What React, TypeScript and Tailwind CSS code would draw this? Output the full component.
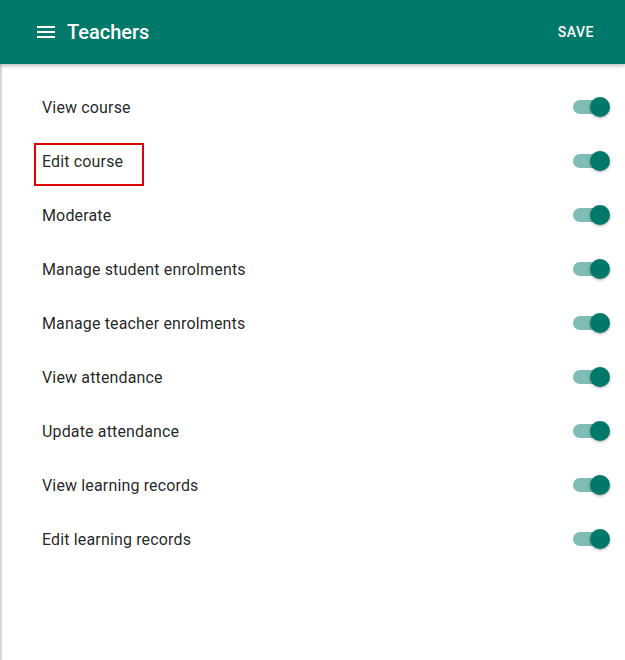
import { useState } from 'react';

const permissions = [
  'View course',
  'Edit course',
  'Moderate',
  'Manage student enrolments',
  'Manage teacher enrolments',
  'View attendance',
  'Update attendance',
  'View learning records',
  'Edit learning records',
];

function Toggle({ on, onClick }: { on: boolean; onClick: () => void }) {
  return (
    <button onClick={onClick} className="relative w-[40px] h-[20px] flex items-center">
      <span className={`block ml-[3px] w-[34px] h-[14px] rounded-full ${on ? 'bg-[#7fbcb5]' : 'bg-[#b0b0b0]'}`} />
      <span
        className={`absolute top-0 w-[20px] h-[20px] rounded-full shadow-[0_1px_3px_rgba(0,0,0,0.35)] ${
          on ? 'left-[20px] bg-[#00796b]' : 'left-0 bg-[#fafafa]'
        }`}
      />
    </button>
  );
}

export default function App() {
  const [enabled, setEnabled] = useState<boolean[]>(permissions.map(() => true));

  return (
    <div className="w-[625px] h-[660px] bg-white flex flex-col font-['Roboto',sans-serif]">
      {/* App bar */}
      <div className="h-[64px] shrink-0 bg-[#00796b] flex items-center pl-[34px] pr-[31px] shadow-[0_2px_4px_rgba(0,0,0,0.25)] z-10">
        <svg width="24" height="24" viewBox="0 0 24 24" fill="white">
          <path d="M3 18h18v-2H3v2zm0-5h18v-2H3v2zm0-7v2h18V6H3z" />
        </svg>
        <h1 className="ml-[9px] text-white text-[20px] font-medium">Teachers</h1>
        <button className="ml-auto text-white text-[14px] font-medium tracking-[0.5px]">SAVE</button>
      </div>

      {/* Permission list */}
      <div className="flex-1 border-l-2 border-[#d6d6d6] pt-[17px]">
        {permissions.map((label, i) => (
          <div key={label} className="h-[54px] flex items-center pl-[40px] pr-[15px]">
            <span className="relative text-[16px] leading-[24px] tracking-[0.15px] text-[rgba(0,0,0,0.87)]">
              {label}
              {i === 1 && (
                <span className="absolute left-[-8px] top-[-7px] w-[110px] h-[43px] border-2 border-[#e00000]" />
              )}
            </span>
            <div className="ml-auto -mt-[2px]">
              <Toggle
                on={enabled[i]}
                onClick={() => setEnabled((prev) => prev.map((v, j) => (j === i ? !v : v)))}
              />
            </div>
          </div>
        ))}
      </div>
    </div>
  );
}
